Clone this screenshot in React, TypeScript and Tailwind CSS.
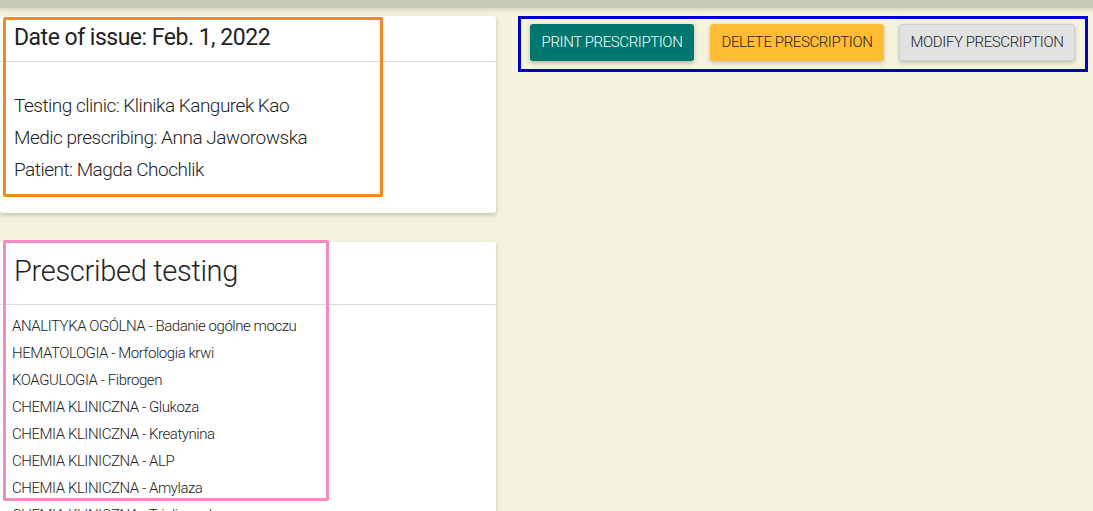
const tests = [
  "ANALITYKA OGÓLNA - Badanie ogólne moczu",
  "HEMATOLOGIA - Morfologia krwi",
  "KOAGULOGIA - Fibrogen",
  "CHEMIA KLINICZNA - Glukoza",
  "CHEMIA KLINICZNA - Kreatynina",
  "CHEMIA KLINICZNA - ALP",
  "CHEMIA KLINICZNA - Amylaza",
  "CHEMIA KLINICZNA - Triglicerydy",
];

export default function App() {
  return (
    <div className="relative h-[511px] overflow-hidden bg-[#f4f3de] font-['Roboto',sans-serif] text-[#222]">
      {/* navbar shadow at the top */}
      <div className="h-[8px] bg-[#c9c9b8]" />
      <div className="h-[6px] bg-gradient-to-b from-[#dcdbc6] to-[#f4f3de]" />

      <div className="flex items-start gap-[22px] pt-[2px]">
        {/* left column */}
        <div className="flex w-[496px] flex-col gap-[29px]">
          <div className="relative rounded-[3px] bg-white shadow-[0_2px_4px_rgba(0,0,0,0.2)]">
            <div className="border-b border-[#dedede] px-[14px] pb-[11px] pt-[10px]">
              <h2 className="whitespace-nowrap text-[23px] leading-[24px] tracking-[-0.5px]">Date of issue: Feb. 1, 2022</h2>
            </div>
            <div className="flex flex-col px-[14px] pb-[27px] pt-[28px] text-[19px] font-light leading-[32px] tracking-[-0.5px]">
              <p>Testing clinic: Klinika Kangurek Kao</p>
              <p>Medic prescribing: Anna Jaworowska</p>
              <p>Patient: Magda Chochlik</p>
            </div>
            <div className="absolute left-[3px] top-[1px] h-[180px] w-[380px] rounded-[2px] border-[3px] border-[#ef8a25]" />
          </div>

          <div className="relative rounded-[3px] bg-white shadow-[0_2px_4px_rgba(0,0,0,0.2)]">
            <div className="border-b border-[#dedede] px-[14px] pb-[14px] pt-[10px]">
              <h2 className="text-[29px] font-light leading-[38px] tracking-[-0.3px]">Prescribed testing</h2>
            </div>
            <ul className="flex flex-col px-[12px] pt-[8px] text-[15px] font-light leading-[27px] tracking-[-0.45px]">
              {tests.map((t) => (
                <li key={t} className="whitespace-nowrap">{t}</li>
              ))}
            </ul>
            <div className="absolute left-[3px] top-[-2px] h-[261px] w-[326px] rounded-[2px] border-[3px] border-[#f28bc2]" />
          </div>
        </div>

        {/* actions */}
        <div className="flex w-[570px] items-center border-[3px] border-[#0000cc] px-[9px] pb-[8px] pt-[5px]">
          <button className="h-[37px] w-[164px] whitespace-nowrap rounded-[3px] bg-[#00776c] text-[15px] font-light uppercase tracking-[-0.4px] text-white shadow-[0_2px_4px_rgba(0,0,0,0.25)]">
            Print prescription
          </button>
          <button className="ml-[16px] h-[37px] w-[174px] whitespace-nowrap rounded-[3px] bg-[#ffbd33] text-[15px] font-light uppercase tracking-[-0.4px] text-[#222] shadow-[0_2px_4px_rgba(0,0,0,0.2)]">
            Delete prescription
          </button>
          <button className="ml-[15px] h-[37px] w-[176px] whitespace-nowrap rounded-[3px] border border-[#cfcfcf] bg-[#e2e2e2] text-[15px] font-light uppercase tracking-[-0.4px] text-[#222] shadow-[0_2px_4px_rgba(0,0,0,0.2)]">
            Modify prescription
          </button>
        </div>
      </div>
    </div>
  );
}
